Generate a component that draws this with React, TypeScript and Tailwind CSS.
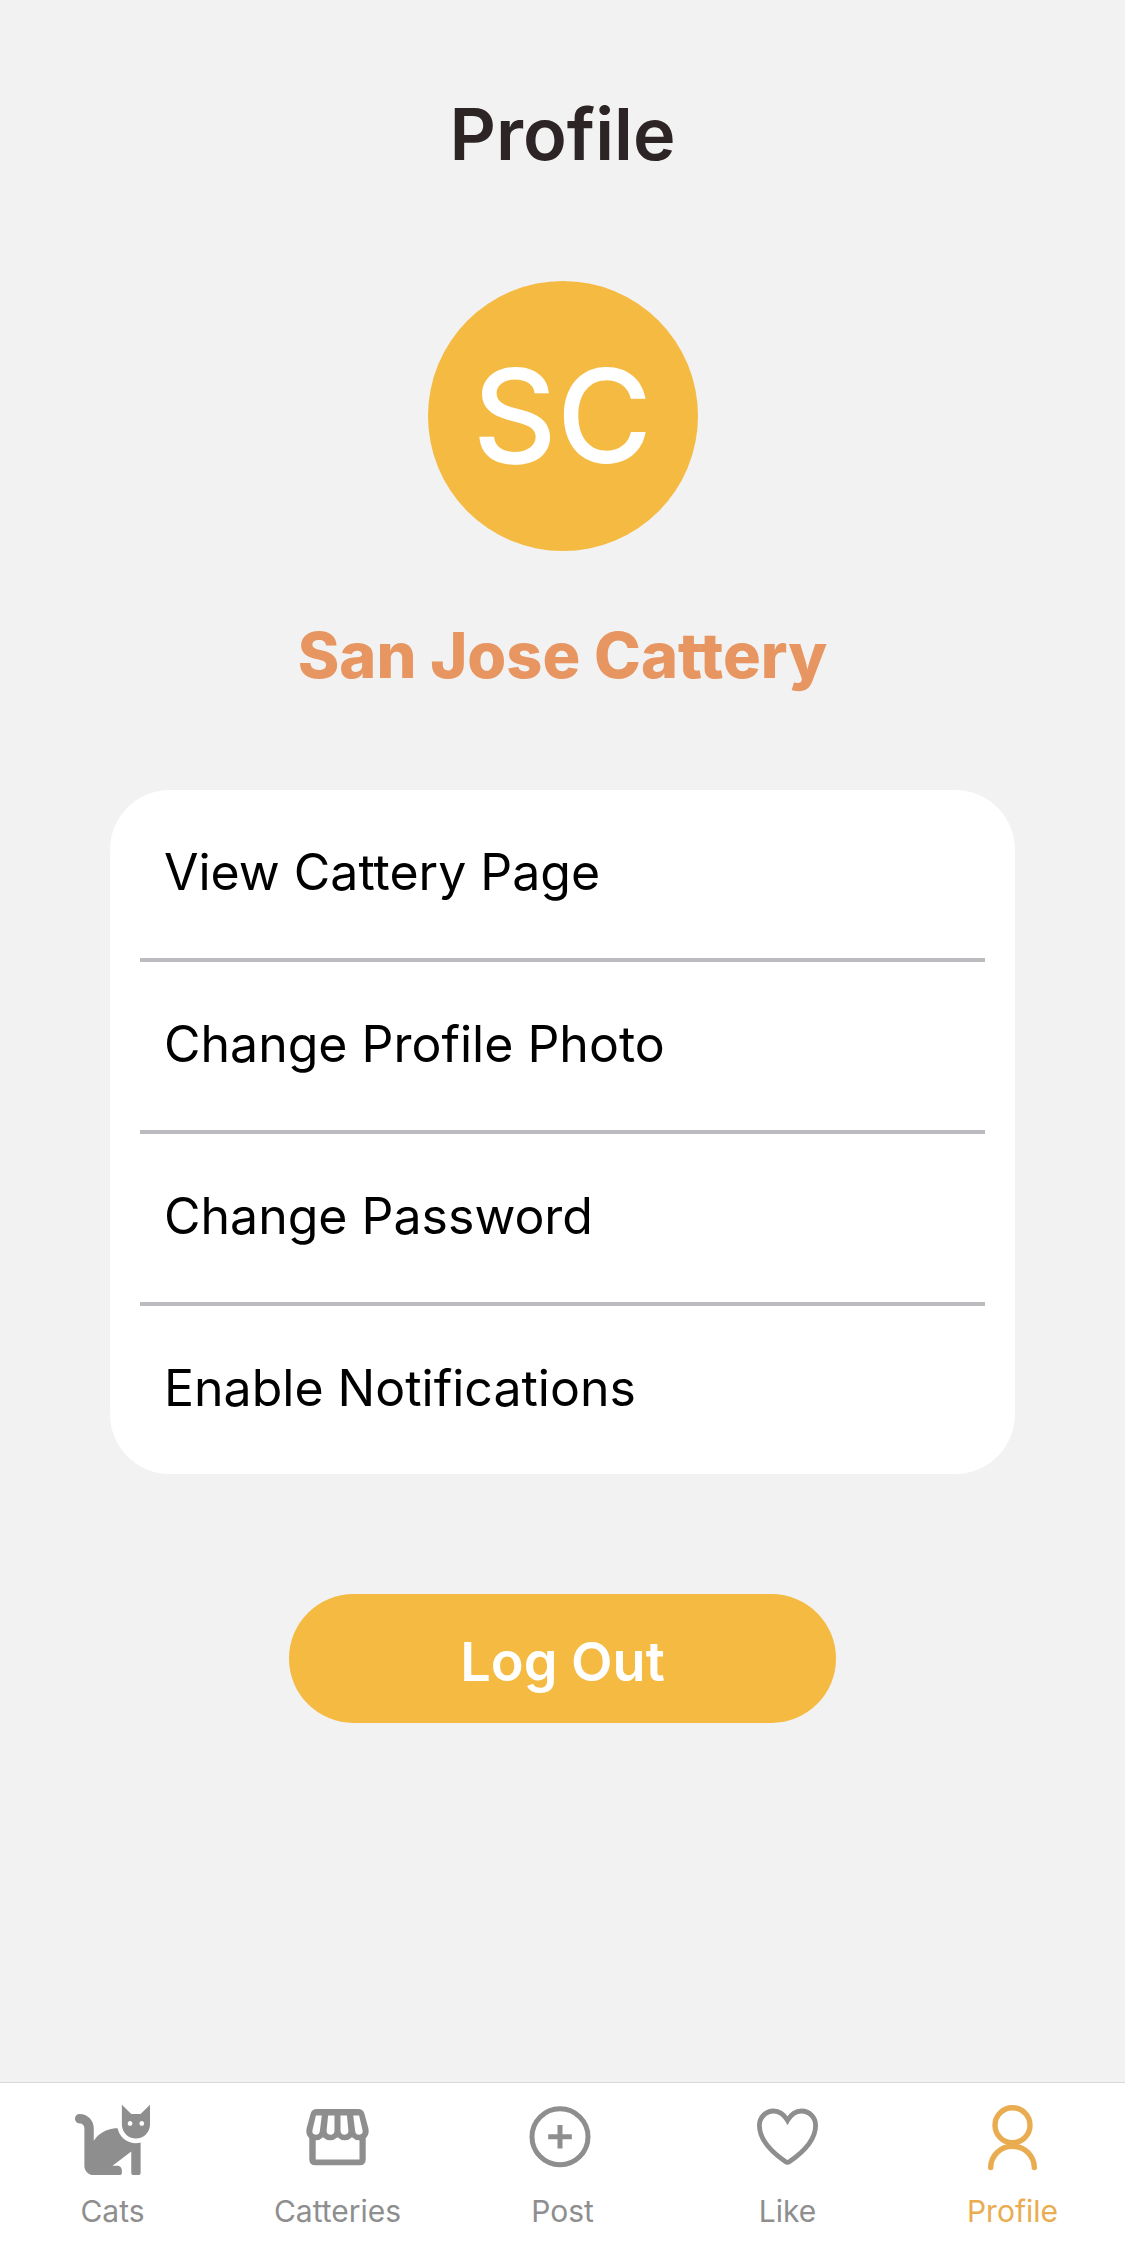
import type { ReactNode } from "react";
import { FaCat } from "react-icons/fa";

const menuItems = [
  "View Cattery Page",
  "Change Profile Photo",
  "Change Password",
  "Enable Notifications",
];

function StoreIcon() {
  return (
    <svg viewBox="0 0 75 75" className="size-[75px]" fill="currentColor" fillRule="evenodd" aria-hidden="true">
      <path d="M17 9H58Q63.3 9 64.5 14L68.3 28Q69.8 34 65.7 38.2V59.3Q65.7 65.3 59.7 65.3H15.3Q9.3 65.3 9.3 59.3V38.2Q5.2 34 6.7 28L10.5 14Q11.7 9 17 9ZM15.7 40.3Q20 40.4 23 37.3Q26 40.3 30.2 40.3Q34.4 40.3 37.5 37.3Q40.6 40.3 44.8 40.3Q49 40.3 52 37.3Q55 40.4 59.5 40.3V59.5H15.7ZM15.9 15.5H21.8L19.8 31.2Q19.2 34.8 15.9 34.8Q11.8 34.6 12.4 30.6ZM28.1 15.5H34.5V30.8Q34.2 34.8 30.4 34.8Q26.4 34.6 26.6 30.6ZM40.5 15.5H46.9L48.4 30.6Q48.6 34.6 44.6 34.8Q40.8 34.8 40.5 30.8ZM53.2 15.5H59.1L62.6 30.6Q63.2 34.6 59.1 34.8Q55.8 34.8 55.2 31.2Z" />
    </svg>
  );
}

function PostIcon() {
  return (
    <svg viewBox="0 0 75 75" className="size-[75px]" fill="none" stroke="currentColor" strokeWidth="5" aria-hidden="true">
      <circle cx="35" cy="36.7" r="28" />
      <path d="M23.2 36.7H46.8M35 24.9V48.5" />
    </svg>
  );
}

function HeartIcon() {
  return (
    <svg viewBox="0 0 75 75" className="size-[75px]" fill="none" stroke="currentColor" strokeWidth="4.8" aria-hidden="true">
      <path d="M37.5 20.4C34 14.4 29.5 11 23.5 11C15.5 11 9.4 17.5 9.4 25.5C9.4 39 20 51 35.7 61.8Q37.5 63 39.3 61.8C55 51 65.6 39 65.6 25.5C65.6 17.5 59.5 11 51.5 11C45.5 11 41 14.4 37.5 20.4Z" />
    </svg>
  );
}

function PersonIcon() {
  return (
    <svg viewBox="0 0 75 75" className="size-[75px]" fill="none" stroke="currentColor" strokeWidth="5.4" strokeLinecap="round" aria-hidden="true">
      <circle cx="37.5" cy="25.2" r="17.5" />
      <path d="M15.7 67.6A21.8 21.4 0 0 1 59.3 67.6" />
    </svg>
  );
}

const tabs: { label: string; icon: ReactNode; active?: boolean }[] = [
  { label: "Cats", icon: <FaCat className="size-[75px]" aria-hidden="true" /> },
  { label: "Catteries", icon: <StoreIcon /> },
  { label: "Post", icon: <PostIcon /> },
  { label: "Like", icon: <HeartIcon /> },
  { label: "Profile", icon: <PersonIcon />, active: true },
];

export default function App() {
  return (
    <div className="flex min-h-screen flex-col bg-[#f2f2f2] font-['Inter',sans-serif]">
      <main className="flex grow flex-col items-center px-[110px] pt-[94px] pb-12">
        <h1 className="text-[72px] leading-[80px] font-semibold text-[#2d2426]">Profile</h1>
        <div className="mt-[107px] flex size-[270px] items-center justify-center rounded-full bg-[#f4ba41] text-[130px] leading-none font-medium text-white">
          SC
        </div>
        <h2 className="mt-16 text-center text-[63px] leading-[80px] font-extrabold text-[#e89661]">
          San Jose Cattery
        </h2>
        <ul className="mt-[95px] w-full divide-y-4 divide-[#bbbabf] rounded-[60px] bg-white px-[30px]">
          {menuItems.map((item) => (
            <li key={item}>
              <button type="button" className="block w-full px-6 pt-[52px] pb-14 text-left text-[50px] leading-[60px] text-black">
                {item}
              </button>
            </li>
          ))}
        </ul>
        <button type="button" className="mt-[120px] rounded-full bg-[#f4ba41] px-[171px] pt-[38px] pb-[31px] text-[54px] leading-[60px] font-semibold text-white">
          Log Out
        </button>
      </main>
      <nav className="grid grid-cols-5 border-t border-[#d8d8d8] bg-white pt-[17px] pb-7">
        {tabs.map((tab) => (
          <a
            key={tab.label}
            href="#"
            aria-current={tab.active ? "page" : undefined}
            className={`flex flex-col items-center gap-4 ${tab.active ? "text-[#e9ac50]" : "text-[#8e8e8f]"}`}
          >
            {tab.icon}
            <span className="text-[30px] leading-10">{tab.label}</span>
          </a>
        ))}
      </nav>
    </div>
  );
}
